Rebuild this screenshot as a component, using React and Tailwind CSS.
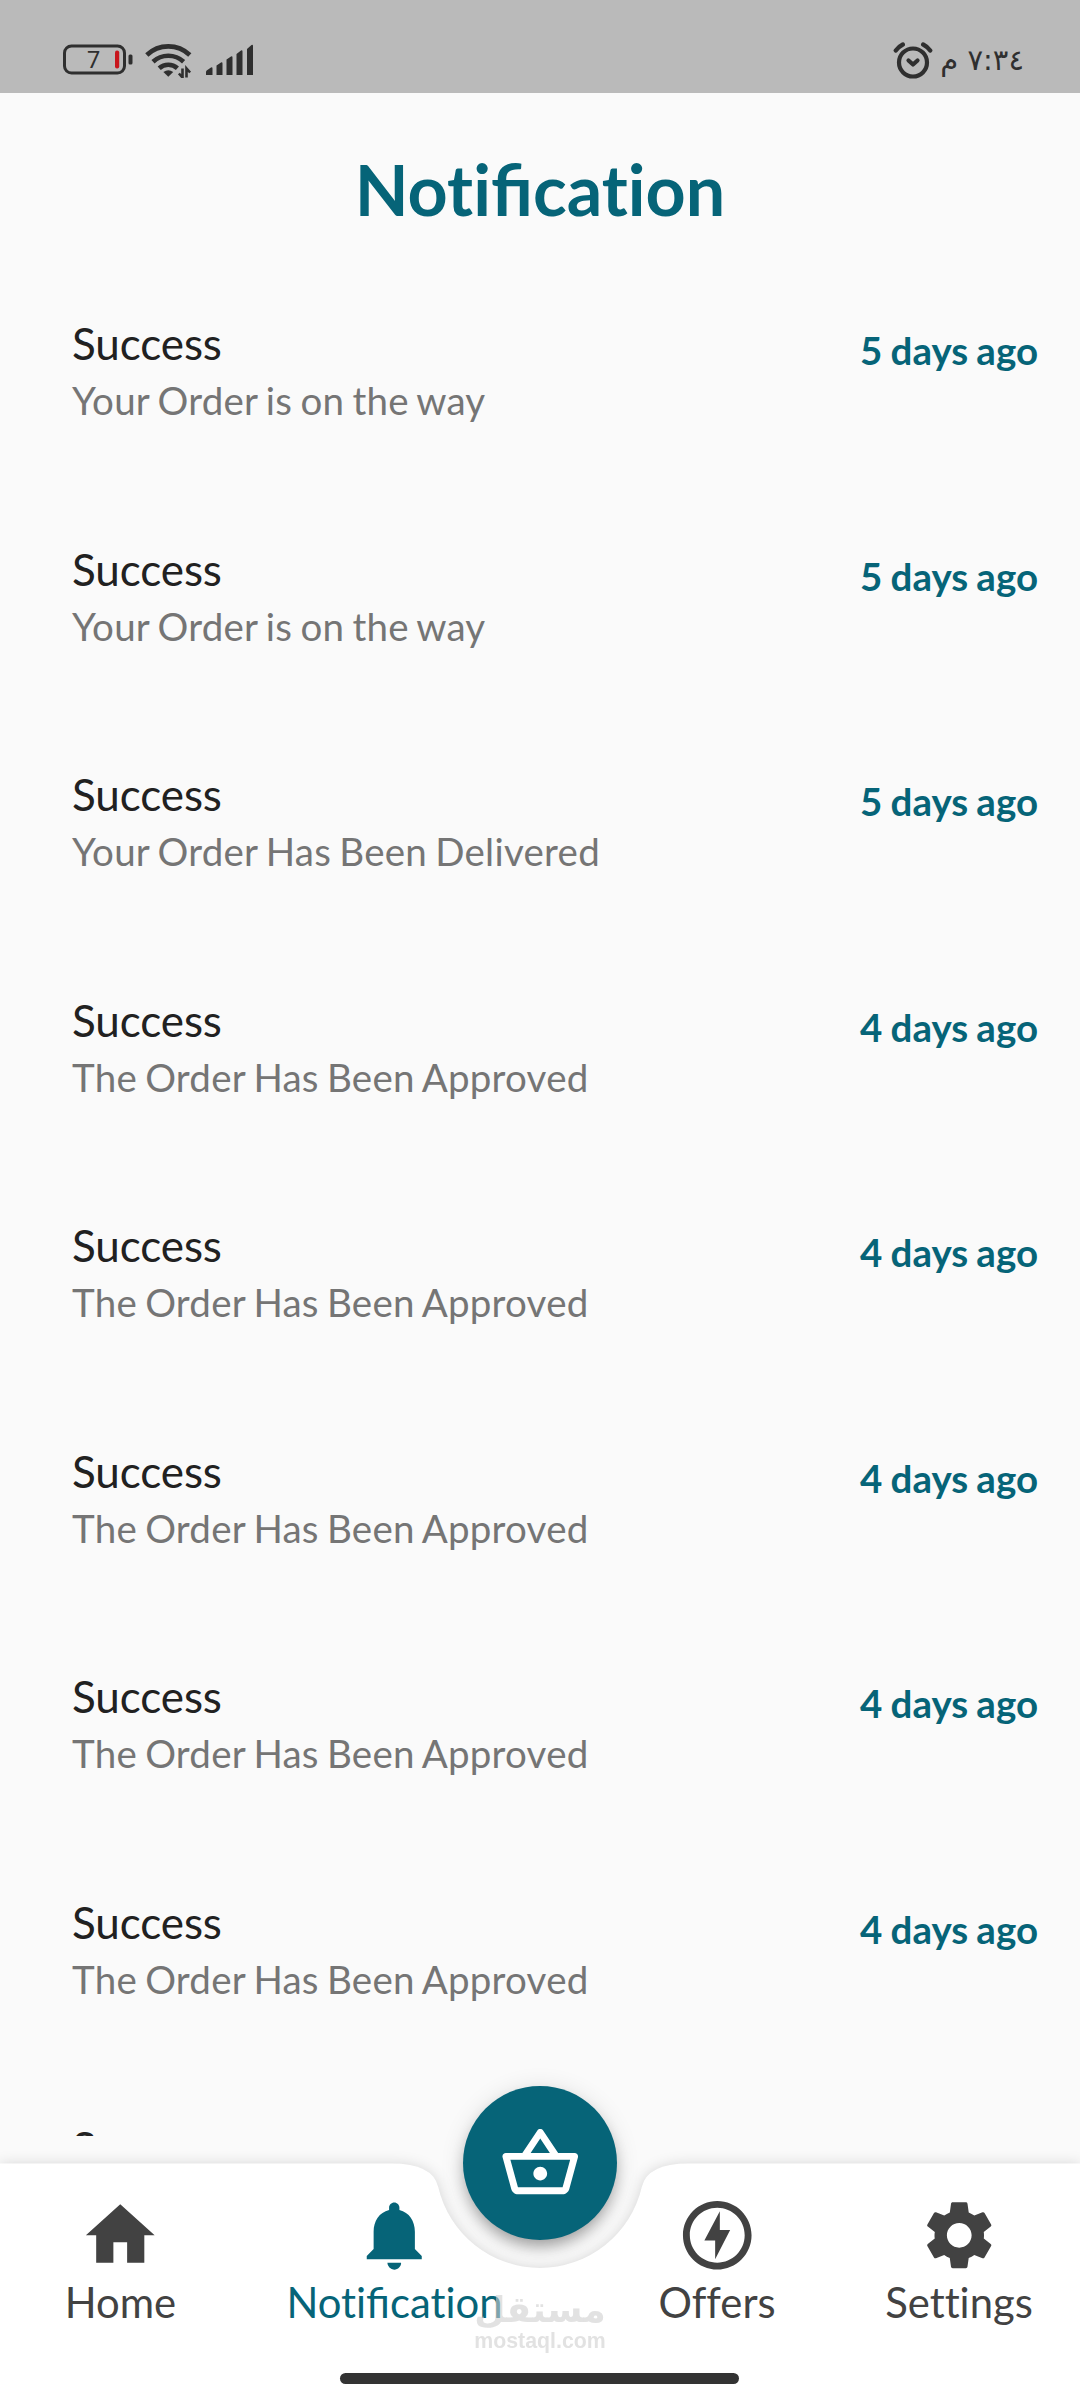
// src/pages/Notifications.jsx
import React from "react";
import {
  MdHome,
  MdNotifications,
  MdOutlineOfflineBolt,
  MdOutlineShoppingBasket,
  MdSettings,
} from "react-icons/md";

const notifications = [
  { id: 1, title: "Success", body: "Your Order is on the way", time: "5 days ago" },
  { id: 2, title: "Success", body: "Your Order is on the way", time: "5 days ago" },
  { id: 3, title: "Success", body: "Your Order Has Been Delivered", time: "5 days ago" },
  { id: 4, title: "Success", body: "The Order Has Been Approved", time: "4 days ago" },
  { id: 5, title: "Success", body: "The Order Has Been Approved", time: "4 days ago" },
  { id: 6, title: "Success", body: "The Order Has Been Approved", time: "4 days ago" },
  { id: 7, title: "Success", body: "The Order Has Been Approved", time: "4 days ago" },
  { id: 8, title: "Success", body: "The Order Has Been Approved", time: "4 days ago" },
  { id: 9, title: "Success", body: "The Order Has Been Approved", time: "4 days ago" },
];

function BatteryIcon() {
  return (
    <svg width="70" height="32" viewBox="0 0 70 32">
      <rect x="1.5" y="2" width="60" height="27" rx="7" fill="none" stroke="#2f2f2f" strokeWidth="3" />
      <rect x="65.5" y="10.500" width="4" height="10" rx="1.5" fill="#2f2f2f" />
      <rect x="52" y="6.500" width="4.200" height="18" rx="2" fill="#c8161d" />
      <text x="30.500" y="24" textAnchor="middle" fontSize="23.500" fill="#2f2f2f" className="font-['Roboto',sans-serif]">
        7
      </text>
    </svg>
  );
}

function WifiIcon() {
  return (
    <svg width="48" height="36" viewBox="0 0 48 36" fill="none" stroke="#2f2f2f" strokeWidth="4.600">
      <path d="M1.800 13a31 31 0 0 1 43 0" />
      <path d="M8 19.800a22.500 22.500 0 0 1 30.600 0" />
      <path d="M14.200 26.300a13.500 13.500 0 0 1 18.200 0" />
      <path d="M18.400 30q4.900-3.600 9.800 0l-4.900 4.800z" fill="#2f2f2f" stroke="none" />
      <path d="M37.500 26.500v9l-3.600-4M41.500 35.500v-9l3.600 4" strokeWidth="2.600" />
    </svg>
  );
}

function SignalIcon() {
  return (
    <svg width="50" height="32" viewBox="0 0 50 32" fill="#2f2f2f">
      <path d="M1 28q0-1 1-1.700L6 23.500q1.500-.6 1.500 1V31H1zM11.500 21.500l4.500-3q1.500-.7 1.500 1V31h-6zM21.500 15.500l4.500-3q1.500-.7 1.500 1V31h-6zM31.500 10l4.500-3.500q1.500-.7 1.500 1V31h-6zM42 5l4.500-4q1.500-.7 1.500 1v29h-6z" />
    </svg>
  );
}

function AlarmIcon() {
  return (
    <svg width="40" height="38" viewBox="0 0 40 38" fill="none" stroke="#2f2f2f" strokeLinecap="round" strokeLinejoin="round">
      <circle cx="20" cy="21.500" r="14" strokeWidth="4.200" />
      <path d="M15.500 19.500l4.500 4 4.500-4" strokeWidth="4.200" />
      <path d="M2.800 9.500q3-4 7-6M37.200 9.500q-3-4-7-6" strokeWidth="4.400" />
    </svg>
  );
}

function StatusBar() {
  return (
    <header className="flex h-[93px] items-center justify-between bg-[#bababa] pt-[27px] pr-14 pl-[63px] text-[#2f2f2f]">
      <div className="flex items-center">
        <BatteryIcon />
        <div className="ml-3">
          <WifiIcon />
        </div>
        <div className="ml-3">
          <SignalIcon />
        </div>
      </div>
      <div className="flex items-center gap-[7px]">
        <AlarmIcon />
        <span dir="rtl" className="font-['DejaVu_Sans',sans-serif] text-[29px] leading-9">
          ٧:٣٤ م
        </span>
      </div>
    </header>
  );
}

// Lato joins "ti" and "tt" too, only the "fi" ligature is wanted
function Label({ text }) {
  const parts = text.split("fi");
  return (
    <span className="[font-variant-ligatures:none]">
      {parts.map((part, i) => (
        <React.Fragment key={i}>
          {i > 0 && <span className="[font-variant-ligatures:normal]">fi</span>}
          {part}
        </React.Fragment>
      ))}
    </span>
  );
}

function NotificationRow({ title, body, time }) {
  return (
    <li className="flex h-[225.500px] shrink-0 items-start justify-between pr-[42px] pl-[72px]">
      <div>
        <h2 className="text-[44px] leading-[53px] tracking-[-0.1px] text-[#212121]">{title}</h2>
        <p className="mt-[7px] text-[38.500px] leading-[46px] tracking-[0.25px] [word-spacing:-1.900px] text-[#757575]">
          {body}
        </p>
      </div>
      <span className="mt-[10px] text-[38.500px] leading-[46px] font-bold [word-spacing:-1.200px] text-[#066478]">
        {time}
      </span>
    </li>
  );
}

function NavItem({ icon: Icon, label, active, className }) {
  return (
    <button className={`flex flex-col items-center ${active ? "text-[#066478]" : "text-[#424242]"} ${className}`}>
      <Icon size={82.5} />
      <span className="mt-[1px] text-[41.800px] leading-[50px]">
        <Label text={label} />
      </span>
    </button>
  );
}

function BottomNav() {
  return (
    <nav className="relative h-[264px] shrink-0 bg-[#fafafa]">
      {/* White bar with the notch for the basket button */}
      <svg
        className="absolute inset-x-0 top-[27px] overflow-visible drop-shadow-[0_1px_7px_rgba(0,0,0,0.16)]"
        width="1080"
        height="237"
        viewBox="0 0 1080 237"
      >
        <path
          d="M0 0.500H391.500Q432.750 0.500 438.200 24A104.500 104.500 0 0 0 641.800 24Q647.250 0.500 688.500 0.500H1080V237H0z"
          fill="#fff"
        />
      </svg>

      <div className="relative flex pt-[57.500px]">
        <NavItem icon={MdHome} label="Home" className="w-[241px]" />
        <NavItem icon={MdNotifications} label="Notification" active className="w-[307px]" />
        <NavItem icon={MdOutlineOfflineBolt} label="Offers" className="ml-[46px] w-[246px]" />
        <NavItem icon={MdSettings} label="Settings" className="w-[238px]" />
      </div>

      <button className="absolute top-[-50px] left-[463px] flex size-[154px] items-center justify-center rounded-full bg-[#066478] text-white shadow-[0_9px_15px_-3px_rgba(0,0,0,0.32),0_3px_24px_rgba(0,0,0,0.12)]">
        <MdOutlineShoppingBasket size={82.5} />
      </button>

      <div className="absolute top-[153px] left-[470px] flex w-[140px] flex-col items-center text-[#cfcfcf] opacity-60">
        <span dir="rtl" className="font-['DejaVu_Sans',sans-serif] text-[36px] leading-[42px] font-bold">
          مستقل
        </span>
        <span className="-mt-[2px] font-['Liberation_Sans',sans-serif] text-[21.300px] leading-6 font-bold">
          mostaql.com
        </span>
      </div>

      <div className="absolute top-[237px] left-[340px] h-[11px] w-[399px] rounded-full bg-[#333333]" />
    </nav>
  );
}

export default function App() {
  return (
    <div className="flex h-[2400px] w-[1080px] flex-col overflow-hidden bg-[#fafafa] font-['Lato',sans-serif]">
      <StatusBar />
      <main className="flex min-h-0 flex-1 flex-col overflow-hidden">
        <h1 className="mt-[55px] text-center text-[70px] leading-[83px] font-bold text-[#066478]">
          <Label text="Notification" />
        </h1>
        <ul className="mt-[86px] flex flex-col">
          {notifications.map((item) => (
            <NotificationRow key={item.id} {...item} />
          ))}
        </ul>
      </main>
      <BottomNav />
    </div>
  );
}
